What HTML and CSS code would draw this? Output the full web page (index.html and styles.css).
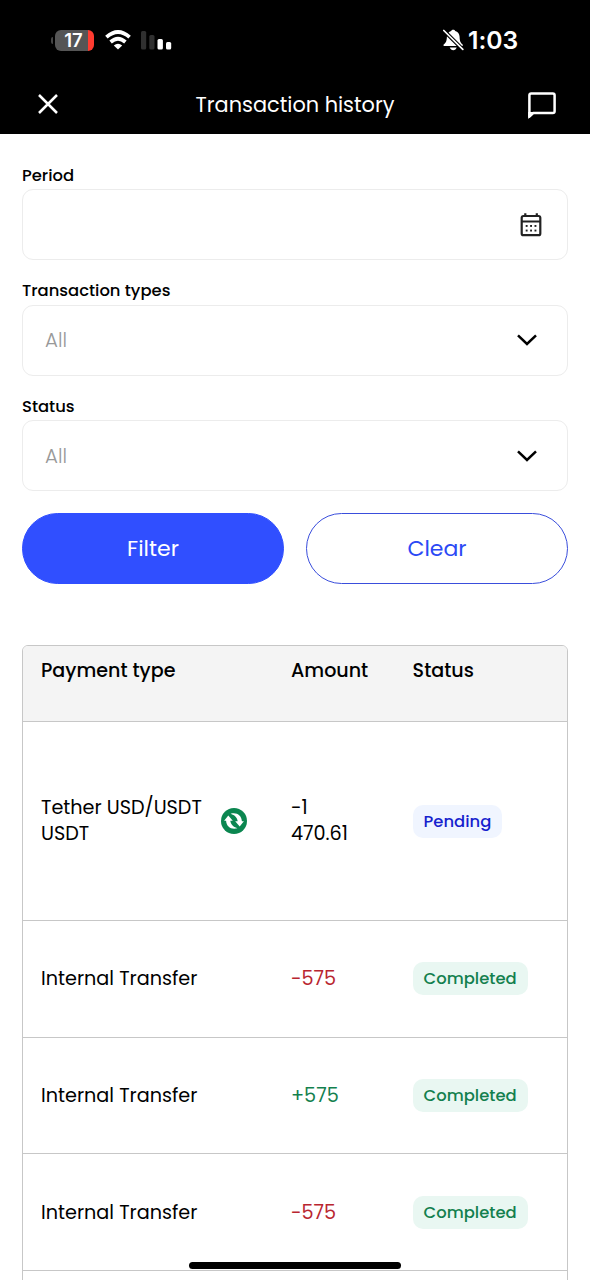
FILE: index.html
```html
<!DOCTYPE html>
<html lang="en">
<head>
<meta charset="utf-8">
<title>Transaction history</title>
<link rel="stylesheet" href="styles.css">
</head>
<body>
<div class="screen">
  <header class="header">
    <div class="status-bar">
      <div class="status-left">
        <div class="battery"><span class="battery-value">17</span></div>
        <svg class="wifi" width="26" height="20" viewBox="0 0 26 20">
          <g fill="none" stroke="#fff" stroke-width="3.7"><path d="M1.4 7.2Q13-3.2 24.6 7.2"/><path d="M5.6 12Q13 5.4 20.4 12"/></g>
          <path d="M8.8 15.4Q13 12 17.2 15.4L13 19.5Z" fill="#fff"/>
        </svg>
        <svg class="signal" width="31" height="20" viewBox="0 0 31 20">
          <rect x="0" y="1" width="5.2" height="18.5" rx="1.5" fill="#303030"/><rect x="8.3" y="5" width="5.2" height="14.5" rx="1.5" fill="#303030"/>
          <rect x="16.5" y="9" width="5.4" height="10.5" rx="1.5" fill="#fff"/><rect x="25" y="12" width="5.2" height="7.5" rx="1.5" fill="#fff"/>
        </svg>
      </div>
      <div class="status-right">
        <svg class="bell" width="21" height="22" viewBox="0 0 21 22">
          <path fill="#fff" d="M.6 17V15.6C2.8 13.8 3.8 12.2 3.9 7.8C4 4.7 5.8 2.5 8.2 1.9C8.6.2 11.8.2 12.2 1.9C14.8 2.5 16.5 4.7 16.6 7.8C16.7 12.2 17.6 13.8 19.7 15.6V17ZM6.7 18.6H13.7C12.8 22 7.8 22 6.7 18.6Z"/>
          <path d="M0 .7L20.4 21" stroke="#000" stroke-width="3.8"/>
          <path d="M.8 1.5L19.8 20.4" stroke="#fff" stroke-width="1.7" stroke-linecap="round"/>
        </svg>
        <span class="clock">1:03</span>
      </div>
    </div>
    <div class="title-bar">
      <svg width="22" height="22" viewBox="0 0 22 22"><path d="M2 2L20 20M20 2L2 20" stroke="#fff" stroke-width="2.5"/></svg>
      <h1 class="title">Transaction history</h1>
      <svg class="chat" width="28" height="28" viewBox="0 0 28 28"><path fill="none" stroke="#fff" stroke-width="2.5" stroke-linejoin="round" d="M1.4 24.7V3.2Q1.4 1.4 3.2 1.4H24.8Q26.6 1.4 26.6 3.2V19.2Q26.6 21 24.8 21H5.2Z"/><path fill="#fff" d="M.2 27V20H7Z"/></svg>
    </div>
  </header>

  <main class="content">
    <div class="field">
      <label class="label">Period</label>
      <div class="control">
        <svg class="calendar" width="22" height="24" viewBox="0 0 22 24">
          <path d="M5.3.2V4M16.8.2V4" stroke="#222" stroke-width="2.2"/>
          <rect x="1.7" y="3" width="18.6" height="19.2" rx="1.8" fill="none" stroke="#222" stroke-width="2.2"/>
          <path d="M2 8.5H20" stroke="#222" stroke-width="2"/>
          <g fill="#222"><rect x="5.7" y="12" width="1.9" height="1.9"/><rect x="10.1" y="12" width="1.9" height="1.9"/><rect x="14.5" y="12" width="1.9" height="1.9"/><rect x="5.7" y="16.6" width="1.9" height="1.9"/><rect x="10.1" y="16.6" width="1.9" height="1.9"/><rect x="14.5" y="16.6" width="1.9" height="1.9"/></g>
        </svg>
      </div>
    </div>
    <div class="field">
      <label class="label">Transaction types</label>
      <div class="control"><span class="placeholder">All</span>
        <svg class="chevron" width="20" height="12" viewBox="0 0 20 12"><path d="M1 1.3L10 10L19 1.3" fill="none" stroke="#000" stroke-width="2.5"/></svg>
      </div>
    </div>
    <div class="field">
      <label class="label">Status</label>
      <div class="control"><span class="placeholder">All</span>
        <svg class="chevron" width="20" height="12" viewBox="0 0 20 12"><path d="M1 1.3L10 10L19 1.3" fill="none" stroke="#000" stroke-width="2.5"/></svg>
      </div>
    </div>
    <div class="actions">
      <button class="button button-primary">Filter</button>
      <button class="button button-outline">Clear</button>
    </div>

    <section class="table">
      <div class="row row-head"><span>Payment type</span><span></span><span>Amount</span><span>Status</span></div>
      <div class="row row-tall">
        <span class="pair">Tether USD/USDT<br>USDT</span>
        <svg class="swap" width="26" height="26" viewBox="0 0 26 26">
          <circle cx="13" cy="13" r="13" fill="#0b8650"/>
          <path fill="#fff" d="M7.3 7.6L11.8 12.7H9.3C9.8 16.5 12 18.5 16.4 20.2C10.3 22 5.4 18.6 5.1 12.7H3.1Z"/>
          <path fill="#fff" d="M18.7 18.4L14.2 13.3H16.7C16.2 9.5 14 7.5 9.6 5.8C15.7 4 20.6 7.4 20.9 13.3H22.9Z"/>
        </svg>
        <span class="pair">-1<br>470.61</span>
        <span><span class="badge badge-pending">Pending</span></span>
      </div>
      <div class="row"><span>Internal Transfer</span><span></span><span class="negative">-575</span><span><span class="badge badge-done">Completed</span></span></div>
      <div class="row"><span>Internal Transfer</span><span></span><span class="positive">+575</span><span><span class="badge badge-done">Completed</span></span></div>
      <div class="row"><span>Internal Transfer</span><span></span><span class="negative">-575</span><span><span class="badge badge-done">Completed</span></span></div>
      <div class="row"></div>
    </section>
  </main>
  <div class="home-indicator"></div>
</div>
</body>
</html>
```

FILE: styles.css
```css
* { box-sizing: border-box; }
body { margin: 0; background: #fff; color: #000; font-family: Poppins, Inter, "Noto Sans", sans-serif; }
svg { display: block; flex: none; }
.screen { position: relative; width: 590px; height: 1280px; overflow: hidden; }
.header { height: 134px; background: #000; color: #fff; }
.status-bar { height: 77px; padding: 3px 72px 0 55px; display: flex; justify-content: space-between; align-items: center; }
.status-left { display: flex; align-items: center; }
.battery { position: relative; width: 39px; height: 21px; padding-right: 2px; border-radius: 6px; background: linear-gradient(90deg, #555 0 33px, #ff3b30 33px); display: flex; align-items: center; justify-content: center; }
.battery::before { content: ""; position: absolute; left: -4px; top: 7px; width: 2px; height: 7px; border-radius: 2px 0 0 2px; background: #444; }
.battery-value { font: 600 18.5px/21px Inter, sans-serif; }
.wifi { margin-left: 11px; }
.signal { margin-left: 10px; }
.status-right { display: flex; align-items: center; gap: 4px; }
.clock { font: 600 24.7px/28px Inter, sans-serif; letter-spacing: -.1px; }
.title-bar { height: 54px; padding: 0 34px 0 37px; display: grid; grid-template-columns: 28px 1fr 28px; align-items: center; }
.title { margin: 2px 3px 0 0; text-align: center; font-size: 20.85px; line-height: 30px; font-weight: 400; white-space: nowrap; }
.chat { margin-top: 3px; }
.content { padding: 30px 22px 0; }
.field { height: 115.4px; padding-top: 1px; }
.label { display: block; height: 24.3px; line-height: 21.5px; font-size: 16.4px; font-weight: 500; }
.control { height: 71px; border: 1.5px solid #ececec; border-radius: 11px; padding: 0 30px 0 22px; display: flex; align-items: center; }
.placeholder { color: #999; font-size: 19.8px; font-weight: 300; }
.chevron { margin-left: auto; }
.calendar { margin-left: auto; margin-right: -5px; }
.actions { display: grid; grid-template-columns: 1fr 1fr; gap: 22px; margin-top: 3px; }
.button { height: 71px; border-radius: 36px; border: 1.5px solid #304fff; font-family: inherit; font-size: 22px; font-weight: 400; padding: 0; }
.button-primary { background: #304fff; color: #fff; }
.button-outline { background: #fff; color: #2b49f5; border-color: #3a4edc; }
.table { margin-top: 61px; border: 1px solid #c7c7c7; border-radius: 6px 6px 0 0; overflow: hidden; font-size: 19.2px; }
.row { height: 116.6px; padding-left: 18px; display: grid; grid-template-columns: 180px 70px 121.6px 1fr; align-items: center; border-bottom: 1px solid #c7c7c7; }
.row-head { height: 76px; padding-top: 12px; align-items: start; background: #f4f4f4; font-weight: 500; font-size: 19.1px; line-height: 25px; }
.row-tall { height: 199px; }
.pair { line-height: 26px; white-space: nowrap; }
.badge { display: block; width: max-content; height: 33px; padding: 0 11px; border-radius: 10px; line-height: 33px; font-size: 16.4px; font-weight: 500; }
.badge-pending { background: #f0f5ff; color: #171fce; }
.badge-done { background: #e9f7f2; color: #13804e; }
.negative { color: #b9252f; }
.positive { color: #13804e; }
.home-indicator { position: absolute; left: 189px; top: 1262px; width: 212px; height: 7px; border-radius: 4px; background: #000; }
```
